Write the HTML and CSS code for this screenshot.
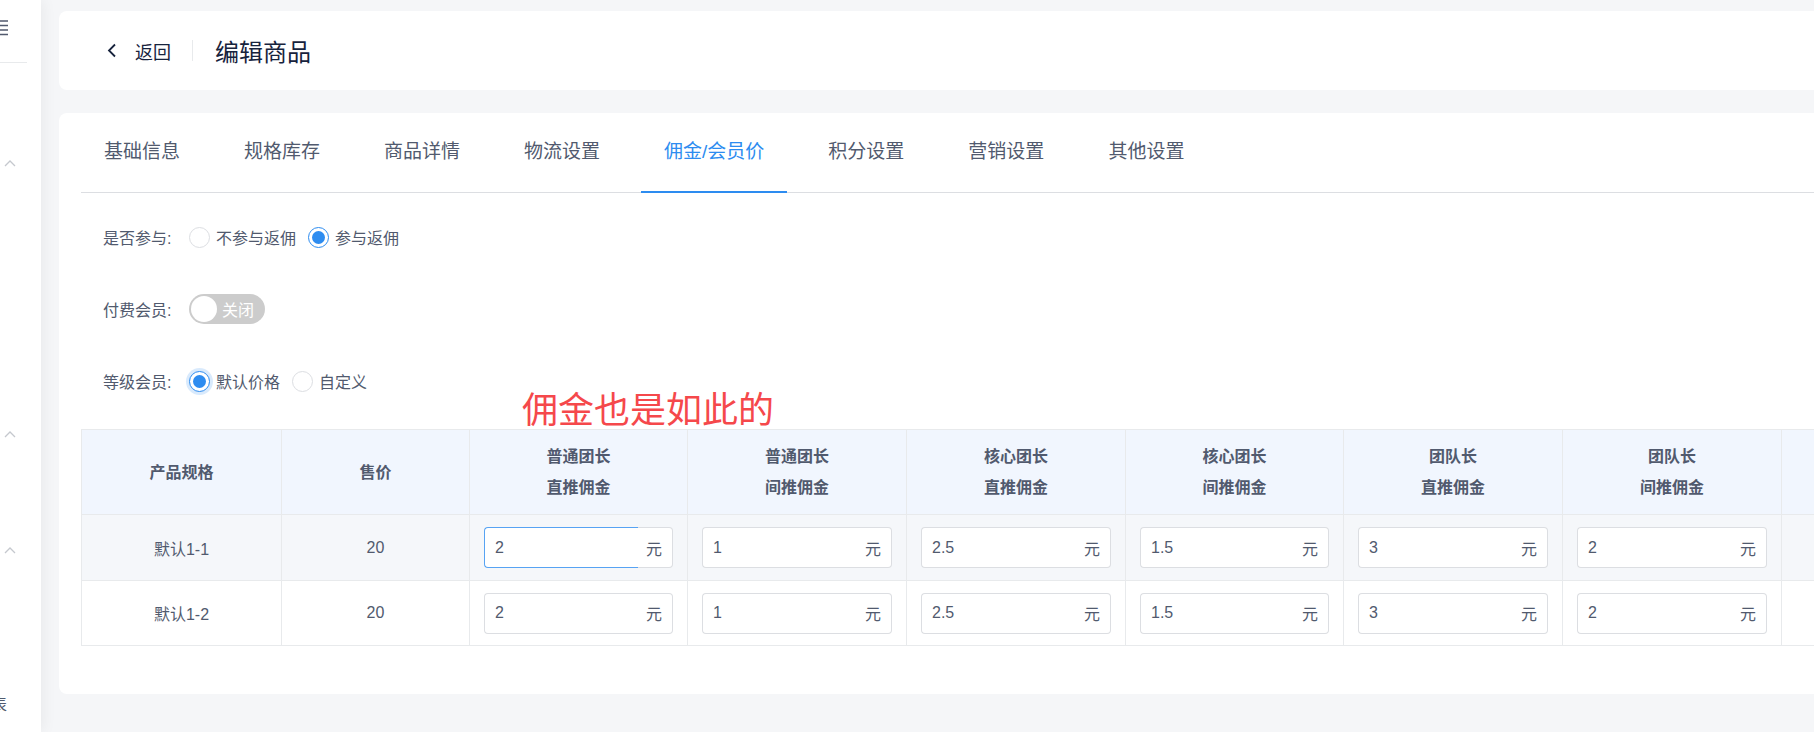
FILE: index.html
```html
<!DOCTYPE html>
<html lang="zh-CN">
  <head>
    <meta charset="UTF-8" />
    <title>编辑商品</title>
    <link rel="stylesheet" href="styles.css">
  </head>

  <body>
    <!-- 左侧菜单（收起后只露出一条） -->
    <div class="side">
      <div class="side-top">
        <svg class="menu-icon" width="9" height="18" viewBox="0 0 9 18">
          <path d="M0 3h8M0 7.5h8M0 12h8M0 16.5h8" stroke="#515a6e" stroke-width="1.6" fill="none" />
        </svg>
      </div>
      <div class="side-item item-a">
        <svg width="12" height="7" viewBox="0 0 12 7"><path d="M1 6L6 1l5 5" stroke="#c5c8ce" stroke-width="1.3" fill="none" /></svg>
      </div>
      <div class="side-item item-b">
        <svg width="12" height="7" viewBox="0 0 12 7"><path d="M1 6L6 1l5 5" stroke="#c5c8ce" stroke-width="1.3" fill="none" /></svg>
      </div>
      <div class="side-item item-c">
        <svg width="12" height="7" viewBox="0 0 12 7"><path d="M1 6L6 1l5 5" stroke="#c5c8ce" stroke-width="1.3" fill="none" /></svg>
      </div>
      <div class="side-text">表</div>
    </div>

    <div class="main">
      <!-- 顶部返回栏 -->
      <div class="card page-head">
        <a class="back" href="javascript:;">
          <svg width="10" height="15" viewBox="0 0 10 15"><path d="M8 1.5L2 7.5l6 6" stroke="#17233d" stroke-width="1.8" fill="none" /></svg>
          返回
        </a>
        <span class="head-line"></span>
        <h1 class="head-title">编辑商品</h1>
      </div>

      <!-- 编辑内容 -->
      <div class="card edit-box">
        <ul class="tabs">
          <li>基础信息</li>
          <li>规格库存</li>
          <li>商品详情</li>
          <li>物流设置</li>
          <li class="active">佣金/会员价</li>
          <li>积分设置</li>
          <li>营销设置</li>
          <li>其他设置</li>
        </ul>

        <div class="form">
          <div class="form-row">
            <span class="form-label">是否参与:</span>
            <label class="radio"><span class="radio-dot"></span>不参与返佣</label>
            <label class="radio checked"><span class="radio-dot"></span>参与返佣</label>
          </div>
          <div class="form-row">
            <span class="form-label">付费会员:</span>
            <span class="switch"><span class="switch-knob"></span>关闭</span>
          </div>
          <div class="form-row">
            <span class="form-label">等级会员:</span>
            <label class="radio checked focus"><span class="radio-dot"></span>默认价格</label>
            <label class="radio"><span class="radio-dot"></span>自定义</label>
          </div>
        </div>

        <div class="tip">佣金也是如此的</div>

        <table class="price-table">
          <colgroup>
            <col style="width: 200px" />
            <col style="width: 188px" />
            <col style="width: 218px" />
            <col style="width: 219px" />
            <col style="width: 219px" />
            <col style="width: 218px" />
            <col style="width: 219px" />
            <col style="width: 219px" />
            <col style="width: 219px" />
          </colgroup>
          <thead>
            <tr>
              <th>产品规格</th>
              <th>售价</th>
              <th>普通团长<br />直推佣金</th>
              <th>普通团长<br />间推佣金</th>
              <th>核心团长<br />直推佣金</th>
              <th>核心团长<br />间推佣金</th>
              <th>团队长<br />直推佣金</th>
              <th>团队长<br />间推佣金</th>
              <th></th>
            </tr>
          </thead>
          <tbody>
            <tr class="row-hover">
              <td>默认1-1</td>
              <td>20</td>
              <td><div class="field focus"><input type="text" value="2" /><span class="unit">元</span></div></td>
              <td><div class="field"><input type="text" value="1" /><span class="unit">元</span></div></td>
              <td><div class="field"><input type="text" value="2.5" /><span class="unit">元</span></div></td>
              <td><div class="field"><input type="text" value="1.5" /><span class="unit">元</span></div></td>
              <td><div class="field"><input type="text" value="3" /><span class="unit">元</span></div></td>
              <td><div class="field"><input type="text" value="2" /><span class="unit">元</span></div></td>
              <td></td>
            </tr>
            <tr>
              <td>默认1-2</td>
              <td>20</td>
              <td><div class="field"><input type="text" value="2" /><span class="unit">元</span></div></td>
              <td><div class="field"><input type="text" value="1" /><span class="unit">元</span></div></td>
              <td><div class="field"><input type="text" value="2.5" /><span class="unit">元</span></div></td>
              <td><div class="field"><input type="text" value="1.5" /><span class="unit">元</span></div></td>
              <td><div class="field"><input type="text" value="3" /><span class="unit">元</span></div></td>
              <td><div class="field"><input type="text" value="2" /><span class="unit">元</span></div></td>
              <td></td>
            </tr>
          </tbody>
        </table>
      </div>
    </div>
  </body>
</html>
```

FILE: styles.css
```css
* {
  margin: 0;
  padding: 0;
  box-sizing: border-box;
}
ul {
  list-style: none;
}
body {
  display: flex;
  height: 732px;
  overflow: hidden;
  background-color: #f5f6f8;
  font-family: "Liberation Sans", "Noto Sans CJK SC", sans-serif;
  font-size: 16px;
  color: #515a6e;
}

/* 左侧菜单 */
.side {
  width: 41px;
  flex: none;
  background-color: #fff;
  box-shadow: 3px 0 14px rgba(0, 0, 0, 0.05);
  position: relative;
  z-index: 1;
  overflow: hidden;
}
.side-top {
  width: 27px;
  height: 63px;
  padding-top: 18px;
  border-bottom: 1px solid #e8eaec;
}
.menu-icon {
  display: block;
}
.side-item {
  height: 12px;
  padding: 2px 0 0 4px;
}
.side-item svg {
  display: block;
}
.item-a {
  margin-top: 95px;
}
.item-b {
  margin-top: 259px;
}
.item-c {
  margin-top: 104px;
}
/* 菜单文字被收起，只露出右半边 */
.side-text {
  margin: 138px 0 0 -9px;
  font-size: 16px;
  line-height: 20px;
}

/* 右侧主体 */
.main {
  flex: 1;
  min-width: 0;
  padding: 11px 0 0 18px;
  overflow: hidden;
}
.card {
  background-color: #fff;
  border-radius: 8px;
  margin-right: -20px;
}

/* 返回栏 */
.page-head {
  height: 79px;
  display: flex;
  align-items: center;
  padding-left: 48px;
}
.back {
  display: flex;
  align-items: center;
  font-size: 18px;
  color: #17233d;
  text-decoration: none;
}
.back svg {
  margin-right: 18px;
}
.head-line {
  width: 1px;
  height: 21px;
  background-color: #e8eaec;
  margin: 0 22px 0 21px;
}
.head-title {
  font-size: 24px;
  font-weight: normal;
  color: #17233d;
}

/* 编辑框 */
.edit-box {
  margin-top: 23px;
  height: 581px;
  padding: 0 0 0 22px;
  position: relative;
}
.tabs {
  display: flex;
  align-items: flex-start;
  gap: 18px;
  height: 80px;
  border-bottom: 1px solid #dcdee2;
}
.tabs li {
  padding: 0 23px;
  font-size: 19px;
  line-height: 78px;
  color: #515a6e;
  cursor: pointer;
}
.tabs .active {
  color: #2d8cf0;
  border-bottom: 2px solid #2d8cf0;
}

/* 表单 */
.form {
  display: flex;
  flex-direction: column;
  gap: 32px;
  padding: 24px 0 0 22px;
}
.form-row {
  display: flex;
  align-items: center;
  height: 40px;
}
.form-label {
  width: 86px;
}
.radio {
  display: flex;
  align-items: center;
  margin-right: 12px;
}
.radio-dot {
  display: flex;
  align-items: center;
  justify-content: center;
  width: 21px;
  height: 21px;
  margin-right: 6px;
  border: 1px solid #dcdee2;
  border-radius: 50%;
  background-color: #fff;
}
.radio.checked .radio-dot {
  border-color: #2d8cf0;
}
.radio.checked .radio-dot::after {
  content: "";
  width: 13px;
  height: 13px;
  border-radius: 50%;
  background-color: #2d8cf0;
}
.radio.focus .radio-dot {
  box-shadow: 0 0 0 3px rgba(45, 140, 240, 0.18);
}
.switch {
  display: flex;
  align-items: center;
  width: 76px;
  height: 30px;
  padding: 0 2px;
  border-radius: 15px;
  background-color: #cccccc;
  color: #fff;
}
.switch-knob {
  width: 26px;
  height: 26px;
  margin-right: 5px;
  border-radius: 50%;
  background-color: #fff;
}

/* 红字提示 */
.tip {
  position: absolute;
  left: 463px;
  top: 279px;
  font-size: 36px;
  line-height: 38px;
  color: #f5484b;
}

/* 价格表 */
.price-table {
  margin-top: 28px;
  width: 1919px;
  table-layout: fixed;
  border-collapse: collapse;
}
.price-table th,
.price-table td {
  border: 1px solid #e8eaec;
  text-align: center;
}
.price-table th {
  height: 85px;
  background-color: #f1f6fe;
  font-weight: bold;
  line-height: 31px;
}
.price-table td {
  height: 65px;
  padding: 0 14px;
}
.price-table .row-hover td {
  height: 66px;
  background-color: #f5f7fa;
}

/* 带单位的输入框 */
.field {
  display: flex;
  height: 41px;
}
.field input {
  flex: 1;
  min-width: 0;
  padding-left: 10px;
  border: 1px solid #dcdee2;
  border-right: 0;
  border-radius: 4px 0 0 4px;
  font: inherit;
  color: #515a6e;
  background-color: #fff;
  outline: none;
}
.field .unit {
  display: flex;
  align-items: center;
  justify-content: flex-end;
  width: 35px;
  padding-right: 10px;
  border: 1px solid #dcdee2;
  border-left: 0;
  border-radius: 0 4px 4px 0;
  background-color: #fff;
}
.field.focus input {
  border-color: #57a3f3;
}
```
